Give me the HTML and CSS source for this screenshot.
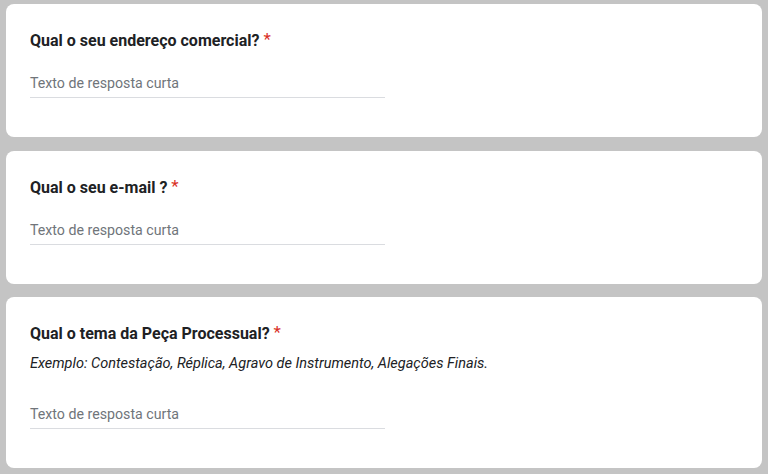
FILE: index.html
```html
<!DOCTYPE html>
<html lang="pt">
<head>
<meta charset="utf-8">
<link rel="stylesheet" href="styles.css">
</head>
<body>
<main class="form">
  <section class="card">
    <div class="title">Qual o seu endereço comercial? <span class="req">*</span></div>
    <div class="field"><span class="placeholder">Texto de resposta curta</span></div>
  </section>
  <section class="card">
    <div class="title">Qual o seu e-mail ? <span class="req">*</span></div>
    <div class="field"><span class="placeholder">Texto de resposta curta</span></div>
  </section>
  <section class="card">
    <div class="title">Qual o tema da Peça Processual? <span class="req">*</span></div>
    <div class="desc">Exemplo: Contestação, Réplica, Agravo de Instrumento, Alegações Finais.</div>
    <div class="field"><span class="placeholder">Texto de resposta curta</span></div>
  </section>
</main>
</body>
</html>
```
FILE: styles.css
```css
html, body {
  margin: 0;
  padding: 0;
  background: #c4c4c4;
}
body {
  font-family: Roboto, "Liberation Sans", Arial, sans-serif;
  width: 768px;
  height: 474px;
  overflow: hidden;
}
.form {
  display: flex;
  flex-direction: column;
  gap: 13.5px;
  padding: 4px 6px 0 6px;
}
.card {
  background: #fff;
  border-radius: 8px;
  padding: 23px 24px 39px 24px;
}
.title {
  font-size: 16px;
  font-weight: 700;
  line-height: 24px;
  color: #202124;
}
.req {
  color: #d93025;
  font-weight: 400;
  font-size: 17px;
  vertical-align: 1px;
}
.desc {
  font-size: 14.5px;
  font-style: italic;
  line-height: 20px;
  color: #202124;
  margin-top: 8px;
}
.field {
  width: 355px;
  margin-top: 20px;
  padding-bottom: 4px;
  border-bottom: 1px solid #dadce0;
}
.desc + .field {
  margin-top: 30px;
}
.placeholder {
  font-size: 14.2px;
  line-height: 20px;
  color: #70757a;
}
```
